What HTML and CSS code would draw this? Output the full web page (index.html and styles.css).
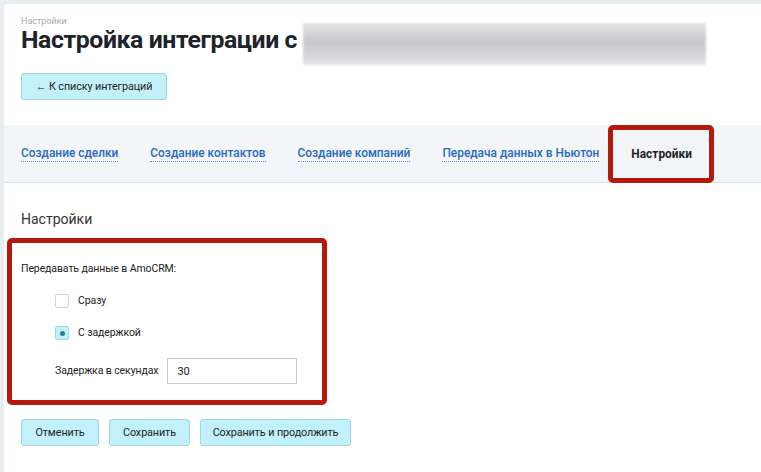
FILE: index.html
```html
<!DOCTYPE html>
<html lang="ru">
<head>
    <meta charset="UTF-8">
    <title>Настройка интеграции</title>
    <link rel="stylesheet" href="styles.css">
</head>
<body>
<div class="panel">
    <div class="header">
        <div class="crumb">Настройки</div>
        <div class="title-row">
            <h1 class="title">Настройка интеграции с</h1>
            <div class="blurred"></div>
        </div>
        <button class="btn back-btn">&larr; К списку интеграций</button>
    </div>

    <div class="tabs">
        <a class="tab">Создание сделки</a>
        <a class="tab">Создание контактов</a>
        <a class="tab">Создание компаний</a>
        <a class="tab">Передача данных в Ньютон</a>
        <span class="tab active">Настройки</span>
    </div>

    <div class="content">
        <h2 class="section-title">Настройки</h2>
        <div class="highlight-box">
            <div class="field-label">Передавать данные в AmoCRM:</div>
            <div class="options">
                <label class="option"><span class="check"></span>Сразу</label>
                <label class="option"><span class="check checked"></span>С задержкой</label>
            </div>
            <div class="delay-row">
                <span>Задержка в секундах</span>
                <input class="text-input" type="text" value="30">
            </div>
        </div>
        <div class="actions">
            <button class="btn">Отменить</button>
            <button class="btn">Сохранить</button>
            <button class="btn">Сохранить и продолжить</button>
        </div>
    </div>
</div>
</body>
</html>
```

FILE: styles.css
```css
body {
    margin: 0;
    background-color: #e8edef;
    font-family: Roboto, "Liberation Sans", sans-serif;
    color: #222;
    padding: 4px 0 0 4px;
    height: 468px;
    overflow: hidden;
}

.panel {
    background-color: #fff;
    border-top-left-radius: 4px;
    height: 100%;
}

.header {
    padding: 12px 17px 0;
}

.crumb {
    font-size: 9px;
    color: #aaa;
    line-height: 10px;
}

.title-row {
    display: flex;
    align-items: flex-start;
    gap: 6px;
    margin-top: -3px;
    white-space: nowrap;
}

.title {
    margin: 2px 0 0;
    font-size: 24.8px;
    font-weight: 700;
    letter-spacing: -0.4px;
    color: #1e2329;
    line-height: 30px;
    flex-shrink: 0;
}

.blurred {
    width: 403px;
    height: 42px;
    flex-shrink: 0;
    background: linear-gradient(180deg, #e4e4e6 0%, #c8c9cc 45%, #d2d3d6 70%, #e6e6e8 100%);
    filter: blur(1px);
}

.btn {
    font-family: inherit;
    font-size: 10.8px;
    letter-spacing: -0.1px;
    color: #222;
    background-color: #c2f0fb;
    border: 1px solid #9fd6e4;
    border-radius: 3px;
    height: 27px;
    padding: 0;
    cursor: pointer;
    white-space: nowrap;
}

.back-btn {
    margin-top: 8px;
    width: 146px;
}

.tabs {
    margin-top: 25px;
    height: 57px;
    background-color: #f3f6f8;
    border-bottom: 1px solid #dcdfe1;
    display: flex;
    align-items: center;
    padding-left: 17px;
    gap: 32px;
    white-space: nowrap;
}

.tab {
    font-size: 11.9px;
    font-weight: 500;
    color: #2769bf;
    border-bottom: 1px dotted #5b8fd0;
    line-height: 15px;
    cursor: pointer;
}

.tab.active {
    color: #1e2329;
    font-weight: 700;
    border: 5px solid #b5190c;
    border-radius: 5px;
    align-self: stretch;
    margin: 0 0 -1px -23px;
    display: flex;
    align-items: center;
    padding: 0 17px 0 18px;
    line-height: normal;
}

.content {
    padding: 0 17px;
}

.section-title {
    margin: 28px 0 10px;
    font-size: 14px;
    font-weight: 400;
    line-height: 17px;
    color: #333;
}

.highlight-box {
    margin-left: -14px;
    width: 301px;
    border: 5px solid #b5190c;
    border-radius: 5px;
    padding: 19px 0 16px 9px;
    font-size: 10.5px;
    letter-spacing: -0.1px;
    line-height: 14px;
}

.options {
    margin: 18px 0 0 34px;
    display: flex;
    flex-direction: column;
    gap: 18px;
}

.option {
    display: flex;
    align-items: center;
    gap: 9px;
}

.check {
    width: 12px;
    height: 12px;
    border: 1px solid #cfd3d6;
    border-radius: 2px;
    background-color: #fff;
    display: flex;
    align-items: center;
    justify-content: center;
}

.check.checked {
    background-color: #c2f0fb;
    border-color: #9fd6e4;
}

.check.checked::after {
    content: "";
    width: 5px;
    height: 5px;
    border-radius: 50%;
    background-color: #2a7f95;
}

.delay-row {
    margin: 18px 0 0 34px;
    display: flex;
    align-items: center;
    gap: 9px;
}

.text-input {
    width: 119px;
    height: 24px;
    border: 1px solid #ccc;
    padding: 0 0 0 9px;
    font-family: inherit;
    font-size: 11px;
    color: #222;
    box-sizing: content-box;
}

.actions {
    margin-top: 14px;
    display: flex;
    gap: 10px;
}

.actions .btn:nth-child(1) { width: 78px; }
.actions .btn:nth-child(2) { width: 81px; }
.actions .btn:nth-child(3) { width: 151px; }
```
